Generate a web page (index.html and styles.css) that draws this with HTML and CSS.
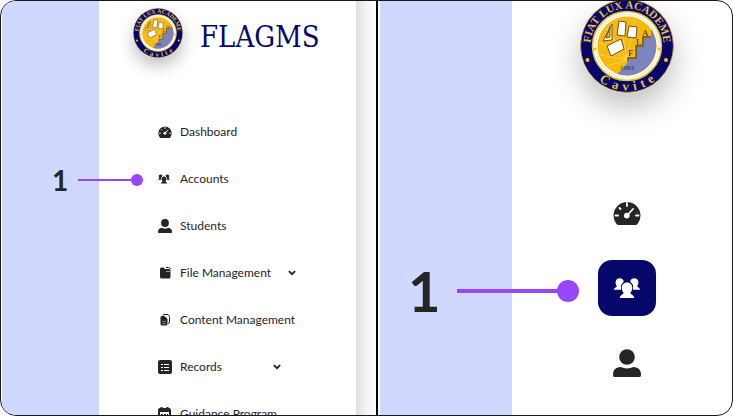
FILE: index.html
```html
<!DOCTYPE html>
<html lang="en">
<head>
<meta charset="utf-8">
<title>FLAGMS navigation</title>
<link rel="stylesheet" href="styles.css">
</head>
<body>
<svg class="defs" aria-hidden="true">
  <symbol id="seal" viewBox="-47 -47 94 94">
    <path id="arc-top" d="M-36 5A36.500 36.500 0 1 1 36 5" fill="none"/>
    <path id="arc-bottom" d="M-43 10A44 44 0 0 0 43 10" fill="none"/>
    <circle r="46.500" fill="#06066b" stroke="#c9a53b"/>
    <circle r="34.500" fill="#fffdf2" stroke="#e3bd35" stroke-width="1.500"/>
    <circle r="31.500" fill="none" stroke="#f0d98a" stroke-width="1.500" stroke-dasharray="1 1.500"/>
    <circle r="29.500" fill="#f6b90c"/>
    <path d="M0 14L-28-4M0 14L-21-19M0 14L-7-28M0 14L-27 9M0 14L-20 20M0 14L8-27" stroke="#ffd34e"/>
    <path d="M24-17V-9H16V0H9V12H1V15Q-3 23-10 27.700A29.500 29.500 0 0 0 24-17Z" fill="#7b84bc"/>
    <path d="M24-9H16V0H9V12H1V15" fill="none" stroke="#7a5210" stroke-width="1.500"/>
    <g fill="#fff" stroke="#6e521c">
      <path d="M-15-22V-6L-24-5Z"/>
      <path d="M-17-19V-9L-21-8Z" fill="#f6b90c"/>
      <path d="M-8-25L-1-24L-2-10L-10-11Z"/>
      <path d="M2-20L10-19L9-8L0-9Z"/>
      <path d="M-20 0L-6-7L-3 3L-16 10Z"/>
    </g>
    <g class="seal-step" fill="#2c2350">
      <text x="15" y="-10">A</text><text x="9" y="-1">L</text><text x="1" y="10">F</text>
    </g>
    <text class="seal-year" x="0" y="24" fill="#1f2360">1993</text>
    <g fill="#e7c23c">
      <text class="seal-name"><textPath href="#arc-top" startOffset="50%">FIAT LUX ACADEME</textPath></text>
      <text class="seal-place"><textPath href="#arc-bottom" startOffset="50%"><tspan dx="0 5 5 5 5 5">Cavite</tspan></textPath></text>
    </g>
    <circle cx="-39.500" cy="14" r="2" fill="#f6c91c"/>
    <circle cx="39" cy="14" r="2" fill="#f6c91c"/>
    <circle cx="-32" cy="3" r="1.500" fill="#f6b90c"/>
    <circle cx="32" cy="3" r="1.500" fill="#f6b90c"/>
  </symbol>
  <symbol id="gauge" viewBox="0 0 28 26">
    <path d="M5.500 25Q4.300 25 3.500 24A13.500 13.500 0 1 1 24.500 24Q23.700 25 22.500 25Z" fill="currentColor"/>
    <path d="M14 3V6M2.500 15.500H5M23 15.500H25.500M6.500 8L7.500 9M14 15.500L20 9" stroke="#fff" stroke-width="1.800" stroke-linecap="round"/>
    <circle cx="13.800" cy="15.600" r="2.900" fill="#fff"/>
  </symbol>
  <symbol id="people" viewBox="0 0 26 20">
    <g fill="currentColor">
      <path d="M5.700.3C3 .3 1.400 2.300 1.600 4.800C1.700 6.500 2.200 7.500 2.900 8.300C2.600 9.400.2 9.400 0 11.800H7V7L9.800 3.500C9.200 1.500 7.700.3 5.700.3Z"/>
      <path d="M20.300.3C23 .3 24.600 2.300 24.400 4.800C24.300 6.500 23.800 7.500 23.100 8.300C23.400 9.400 25.800 9.400 26 11.800H19V7L16.200 3.500C16.800 1.500 18.300.3 20.300.3Z"/>
      <path class="bust-front" d="M13 4.500C9.500 4.500 7.600 7 7.700 10C7.800 12.300 8.700 13.700 9.700 14.800C9.600 16.500 6.100 16.500 5.800 20H20.200C19.900 16.500 16.400 16.500 16.300 14.800C17.300 13.700 18.200 12.300 18.300 10C18.400 7 16.500 4.500 13 4.500Z"/>
    </g>
  </symbol>
  <symbol id="person" viewBox="0 0 28 28">
    <circle cx="14" cy="8" r="7.800" fill="currentColor"/>
    <path d="M7 18Q8.500 18 10 18.700Q14 20.200 18 18.700Q19.500 18 21 18Q28 18.500 28 26Q28 28 26.500 28H1.500Q0 28 0 26Q0 18.500 7 18Z" fill="currentColor"/>
  </symbol>
  <symbol id="folder" viewBox="0 0 14 14">
    <path d="M2 3Q2 1.500 3.500 1.500H5.500L7 3H11Q12.500 3 12.500 4.500V11Q12.500 12.500 11 12.500H3.500Q2 12.500 2 11Z" fill="currentColor"/>
    <path d="M8 1.500H10.500Q12 1.500 12.500 3" fill="none" stroke="currentColor"/>
    <path d="M8 5.500H12" stroke="#999"/>
  </symbol>
  <symbol id="documents" viewBox="0 0 14 14">
    <path d="M5 2.500Q5 1.500 6 1.500H10L11.500 3.500V9Q11.500 10.500 10 10.500" fill="none" stroke="currentColor"/>
    <path d="M2.500 4.500Q2.500 3 4 3H6.500L9.500 6V11Q9.500 12.500 8 12.500H4Q2.500 12.500 2.500 11Z" fill="currentColor"/>
    <path d="M4.500 8.500H7.500M4.500 10.500H7.500" fill="none" stroke="#888"/>
  </symbol>
  <symbol id="list" viewBox="0 0 14 14">
    <rect width="14" height="14" rx="2" fill="currentColor"/>
    <path d="M3 4.500H5M6 4.500H11M3 7.500H5M6 7.500H11M3 10.500H5M6 10.500H11" stroke="#fff"/>
  </symbol>
  <symbol id="calendar" viewBox="0 0 14 14">
    <path d="M3.500 0V3M9.500 0V3" stroke="currentColor" stroke-width="2"/>
    <rect x="1" y="2" width="11" height="11" rx="1" fill="none" stroke="currentColor" stroke-width="2"/>
    <path d="M1 4H12" stroke="currentColor" stroke-width="2"/>
    <path d="M3 7.500H10" stroke="currentColor" stroke-dasharray="2 1"/>
  </symbol>
  <symbol id="chevron" viewBox="0 0 8 8">
    <path d="M1.500 2.500L4 5L6.500 2.500" fill="none" stroke="currentColor" stroke-width="1.500"/>
  </symbol>
</svg>

<main class="board">
  <section class="pane pane-wide">
    <div class="margin"></div>
    <aside class="sidebar">
      <header class="brand">
        <svg class="seal" role="img" aria-label="Fiat Lux Academe seal"><use href="#seal"/></svg>
        <h1>FLAGMS</h1>
      </header>
      <nav class="menu" aria-label="Main">
        <a href="#dashboard"><svg><use href="#gauge"/></svg><span>Dashboard</span></a>
        <a href="#accounts"><svg class="small"><use href="#people"/></svg><span>Accounts</span></a>
        <a href="#students"><svg><use href="#person"/></svg><span>Students</span></a>
        <a href="#files"><svg><use href="#folder"/></svg><span>File Management</span><svg class="chevron"><use href="#chevron"/></svg></a>
        <a href="#content"><svg><use href="#documents"/></svg><span>Content Management</span></a>
        <a href="#records"><svg><use href="#list"/></svg><span>Records</span><svg class="chevron"><use href="#chevron"/></svg></a>
        <a href="#guidance"><svg><use href="#calendar"/></svg><span>Guidance Program</span></a>
      </nav>
    </aside>
    <div class="edge"></div>
    <div class="callout"><b>1</b><i class="line"></i><i class="dot"></i></div>
  </section>
  <section class="pane pane-compact">
    <div class="margin"></div>
    <aside class="sidebar">
      <header class="brand">
        <svg class="seal" role="img" aria-label="Fiat Lux Academe seal"><use href="#seal"/></svg>
      </header>
      <nav class="rail" aria-label="Compact">
        <a href="#dashboard" aria-label="Dashboard"><svg><use href="#gauge"/></svg></a>
        <a href="#accounts" aria-label="Accounts" class="active"><svg><use href="#people"/></svg></a>
        <a href="#students" aria-label="Students"><svg><use href="#person"/></svg></a>
      </nav>
    </aside>
    <div class="callout"><b>1</b><i class="line"></i><i class="dot"></i></div>
  </section>
</main>
</body>
</html>
```

FILE: styles.css
```css
* { box-sizing: border-box; }

body {
  margin: 0;
  background: #fff;
  color: #252525;
  font-family: Lato, "Liberation Sans", sans-serif;
}

.defs { display: none; }

.board {
  display: grid;
  grid-template-columns: 377fr 354fr;
  height: 100vh;
  border: 1px solid #1c1a1e;
  border-radius: 16px;
  overflow: hidden;
}

.pane {
  position: relative;
  display: grid;
  min-width: 0;
  min-height: 0;
  overflow: hidden;
}

.pane-wide {
  grid-template-columns: 97fr 257fr 20fr;
  padding-left: 1px;
  border-right: 2px solid #000;
}

.pane-compact {
  grid-template-columns: 132fr 220fr;
  padding-left: 2px;
}

.margin { background: #d0d8ff; }

.edge { background: linear-gradient(90deg, #dedede, #f0f0f0 40%, #fff); }

.brand { display: flex; align-items: center; }

.seal { flex: none; border-radius: 50%; }

.seal-name { font: bold 11px "Liberation Serif", serif; text-anchor: middle; }
.seal-place { font: bold 13px "Liberation Serif", serif; text-anchor: middle; }
.seal-step { font: 9px "Liberation Serif", serif; }
.seal-year { font: 7px "Liberation Serif", serif; text-anchor: middle; }

.bust-front { stroke: var(--gap, #fff); stroke-width: 1; paint-order: stroke; }

.pane-wide .brand {
  gap: 17px;
  height: 107px;
  padding: 0 0 43px 34px;
}

.pane-wide .seal {
  width: 50px;
  height: 50px;
  box-shadow: 0 8px 16px rgba(0, 0, 0, 0.25);
}

h1 {
  margin: 8px 0 0;
  color: #06066b;
  font: 29px/36px "DejaVu Serif Condensed", "Liberation Serif", serif;
}

.menu a {
  display: flex;
  align-items: center;
  gap: 8px;
  height: 47px;
  padding-left: 59px;
  color: inherit;
  font-size: 12px;
  line-height: 16px;
  white-space: nowrap;
  text-decoration: none;
}

.menu svg { flex: none; width: 14px; height: 14px; }
.menu .small { padding-right: 2px; }
.menu span { min-width: 76px; }
.menu .chevron { width: 10px; height: 10px; margin-left: 8px; }

.pane-compact .brand {
  justify-content: center;
  height: 174px;
  padding: 0 0 84px 10px;
}

.pane-compact .seal {
  width: 94px;
  height: 94px;
  box-shadow: 0 14px 30px rgba(0, 0, 0, 0.25);
}

.rail {
  display: grid;
  grid-auto-rows: 75px;
  place-items: center;
  padding-left: 10px;
}

.rail a {
  display: grid;
  place-items: center;
  width: 58px;
  height: 56px;
  border-radius: 14px;
  color: inherit;
}

.rail svg { width: 28px; height: 28px; }

.rail .active {
  --gap: #06066b;
  background: #06066b;
  color: #fff;
}

.rail .active svg { width: 26px; height: 20px; }

/* Numbered pointers laid over the panes */
.callout { position: absolute; display: flex; align-items: center; }
.callout .line { background: #9747ff; }
.callout .dot { border-radius: 50%; background: #9747ff; }

.pane-wide .callout { top: 161px; left: 51px; }
.pane-wide .callout b { width: 26px; font-size: 28px; line-height: 36px; }
.pane-wide .line { width: 53px; height: 2px; }
.pane-wide .dot { width: 12px; height: 12px; }

.pane-compact .callout { top: 254px; left: 30px; }
.pane-compact .callout b { width: 49px; font-size: 56px; line-height: 72px; }
.pane-compact .line { width: 101px; height: 4px; }
.pane-compact .dot { width: 22px; height: 22px; margin-left: -1px; }
```
